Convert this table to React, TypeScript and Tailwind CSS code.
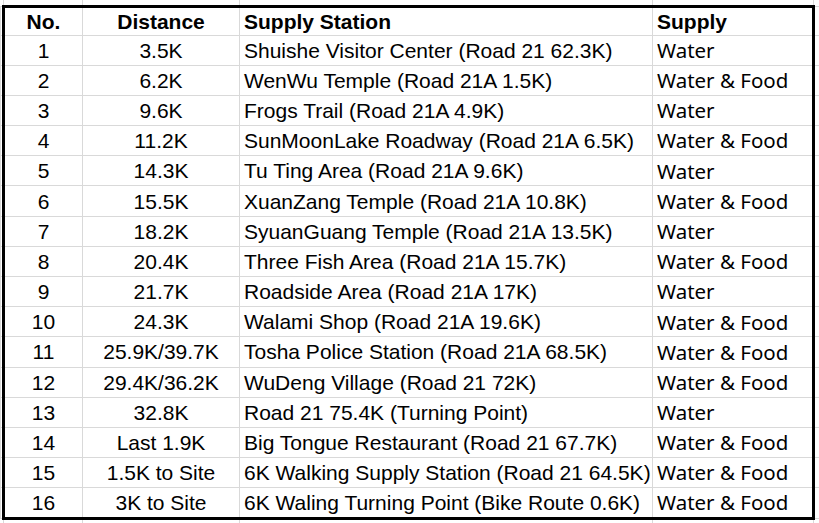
import React from 'react';

const rows: [string, string, string, string][] = [
  ['1', '3.5K', 'Shuishe Visitor Center (Road 21 62.3K)', 'Water'],
  ['2', '6.2K', 'WenWu Temple (Road 21A 1.5K)', 'Water & Food'],
  ['3', '9.6K', 'Frogs Trail (Road 21A 4.9K)', 'Water'],
  ['4', '11.2K', 'SunMoonLake Roadway (Road 21A 6.5K)', 'Water & Food'],
  ['5', '14.3K', 'Tu Ting Area (Road 21A 9.6K)', 'Water'],
  ['6', '15.5K', 'XuanZang Temple (Road 21A 10.8K)', 'Water & Food'],
  ['7', '18.2K', 'SyuanGuang Temple (Road 21A 13.5K)', 'Water'],
  ['8', '20.4K', 'Three Fish Area (Road 21A 15.7K)', 'Water & Food'],
  ['9', '21.7K', 'Roadside Area (Road 21A 17K)', 'Water'],
  ['10', '24.3K', 'Walami Shop (Road 21A 19.6K)', 'Water & Food'],
  ['11', '25.9K/39.7K', 'Tosha Police Station (Road 21A 68.5K)', 'Water & Food'],
  ['12', '29.4K/36.2K', 'WuDeng Village (Road 21 72K)', 'Water & Food'],
  ['13', '32.8K', 'Road 21 75.4K (Turning Point)', 'Water'],
  ['14', 'Last 1.9K', 'Big Tongue Restaurant (Road 21 67.7K)', 'Water & Food'],
  ['15', '1.5K to Site', '6K Walking Supply Station (Road 21 64.5K)', 'Water & Food'],
  ['16', '3K to Site', '6K Waling Turning Point (Bike Route 0.6K)', 'Water & Food'],
];

const grid = 'border border-[#d9d9d9] p-0';

export default function App() {
  return (
    <div className="w-[819px] h-[523px] overflow-hidden bg-white text-black font-['Liberation_Sans',Arial,sans-serif]">
      <table className="w-[819px] table-fixed border-collapse text-[21px] leading-none">
        <colgroup>
          <col className="w-[3px]" />
          <col className="w-[79px]" />
          <col className="w-[157px]" />
          <col className="w-[413px]" />
          <col className="w-[161px]" />
          <col className="w-[6px]" />
        </colgroup>
        <tbody>
          {/* gridlines peeking above the table */}
          <tr className="h-[6px]">
            <td className="border-r border-[#d9d9d9] p-0" />
            <td className="border-x border-[#d9d9d9] p-0" />
            <td className="border-x border-[#d9d9d9] p-0" />
            <td className="border-x border-[#d9d9d9] p-0" />
            <td className="border-x border-[#d9d9d9] p-0" />
            <td className="border-l border-[#d9d9d9] p-0" />
          </tr>
          <tr className="h-[29px] font-bold">
            <td className={grid} />
            <td className={`${grid} border-l-[3px] border-t-[3px] border-l-black border-t-black text-center`}>No.</td>
            <td className={`${grid} border-t-[3px] border-t-black text-center`}>Distance</td>
            <td className={`${grid} border-t-[3px] border-t-black pl-1 text-left`}>Supply Station</td>
            <td className={`${grid} border-r-[3px] border-t-[3px] border-r-black border-t-black pl-1 text-left`}>Supply</td>
            <td className={grid} />
          </tr>
          {rows.map((r, i) => {
            const last = i === rows.length - 1;
            const bottom = last ? 'border-b-[3px] border-b-black' : '';
            return (
              <tr key={r[0]} className="h-[30.2px]">
                <td className={grid} />
                <td className={`${grid} ${bottom} border-l-[3px] border-l-black text-center`}>{r[0]}</td>
                <td className={`${grid} ${bottom} text-center whitespace-nowrap`}>{r[1]}</td>
                <td className={`${grid} ${bottom} pl-1 text-left whitespace-nowrap`}>{r[2]}</td>
                <td className={`${grid} ${bottom} border-r-[3px] border-r-black pl-1 text-left whitespace-nowrap font-['Noto_Sans',sans-serif] text-[20.5px]`}>{r[3]}</td>
                <td className={grid} />
              </tr>
            );
          })}
          <tr className="h-[6px]">
            <td className="border-r border-[#d9d9d9] p-0" />
            <td className="border-x border-[#d9d9d9] p-0" />
            <td className="border-x border-[#d9d9d9] p-0" />
            <td className="border-x border-[#d9d9d9] p-0" />
            <td className="border-x border-[#d9d9d9] p-0" />
            <td className="border-l border-[#d9d9d9] p-0" />
          </tr>
        </tbody>
      </table>
    </div>
  );
}
